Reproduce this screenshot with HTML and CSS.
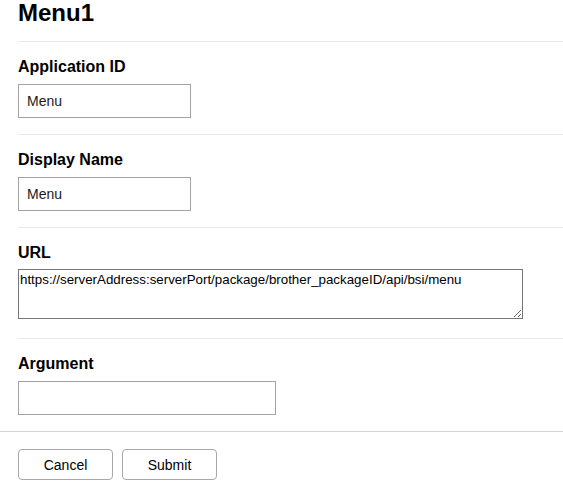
FILE: index.html
```html
<!DOCTYPE html>
<html lang="en">
<head>
    <meta charset="UTF-8">
    <meta name="viewport" content="width=device-width, initial-scale=1.0">
    <title>Menu1</title>
    <link rel="stylesheet" href="styles.css">
</head>
<body>
    <h1 class="title">Menu1</h1>
    <form id="menu-form" class="menu-form">
        <div class="field">
            <label for="app-id">Application ID</label>
            <input type="text" id="app-id" class="text-input" value="Menu">
        </div>
        <div class="field">
            <label for="display-name">Display Name</label>
            <input type="text" id="display-name" class="text-input" value="Menu">
        </div>
        <div class="field url-field">
            <label for="url">URL</label>
            <textarea id="url" class="url-input">https://serverAddress:serverPort/package/brother_packageID/api/bsi/menu</textarea>
        </div>
        <div class="field">
            <label for="argument">Argument</label>
            <input type="text" id="argument" class="text-input wide">
        </div>
    </form>
    <div class="actions">
        <button type="button" class="btn">Cancel</button>
        <button type="submit" form="menu-form" class="btn">Submit</button>
    </div>
</body>
</html>
```

FILE: styles.css
```css
body {
    font-family: "Liberation Sans", Arial, sans-serif;
    margin: 0;
    padding: 0;
    color: #000;
    background-color: #fff;
}
.title {
    margin: 0;
    padding: 0 18px 16px;
    font-size: 24px;
    line-height: 25px;
    font-weight: bold;
}
.menu-form {
    margin: 0;
    padding-left: 18px;
}
.field {
    border-top: 1px solid #e9e9e9;
    padding: 16px 0 16px;
}
.field label {
    display: block;
    font-size: 16px;
    line-height: 18px;
    font-weight: bold;
    margin-bottom: 8px;
}
.text-input {
    display: block;
    box-sizing: border-box;
    width: 173px;
    height: 34px;
    margin: 0;
    padding: 0 8px;
    border: 1px solid #a3a3a3;
    font-family: "Liberation Sans", Arial, sans-serif;
    font-size: 14px;
    color: #1a1a1a;
}
.text-input.wide {
    width: 258px;
}
.url-field label {
    margin-bottom: 7px;
}
.url-input {
    display: block;
    box-sizing: border-box;
    width: 505px;
    height: 50px;
    margin: 0 0 3px;
    padding: 2px 1px;
    border: 1px solid #767676;
    font-family: "Liberation Sans", Arial, sans-serif;
    font-size: 13.33px;
    line-height: 16px;
    color: #000;
}
.actions {
    border-top: 1px solid #d4d4d4;
    padding: 17px 18px;
    display: flex;
    gap: 9px;
}
.btn {
    width: 95px;
    height: 31px;
    background-color: #fff;
    border: 1px solid #a8a8a8;
    border-radius: 4px;
    font-family: "Liberation Sans", Arial, sans-serif;
    font-size: 14px;
    color: #000;
    cursor: pointer;
}
```
